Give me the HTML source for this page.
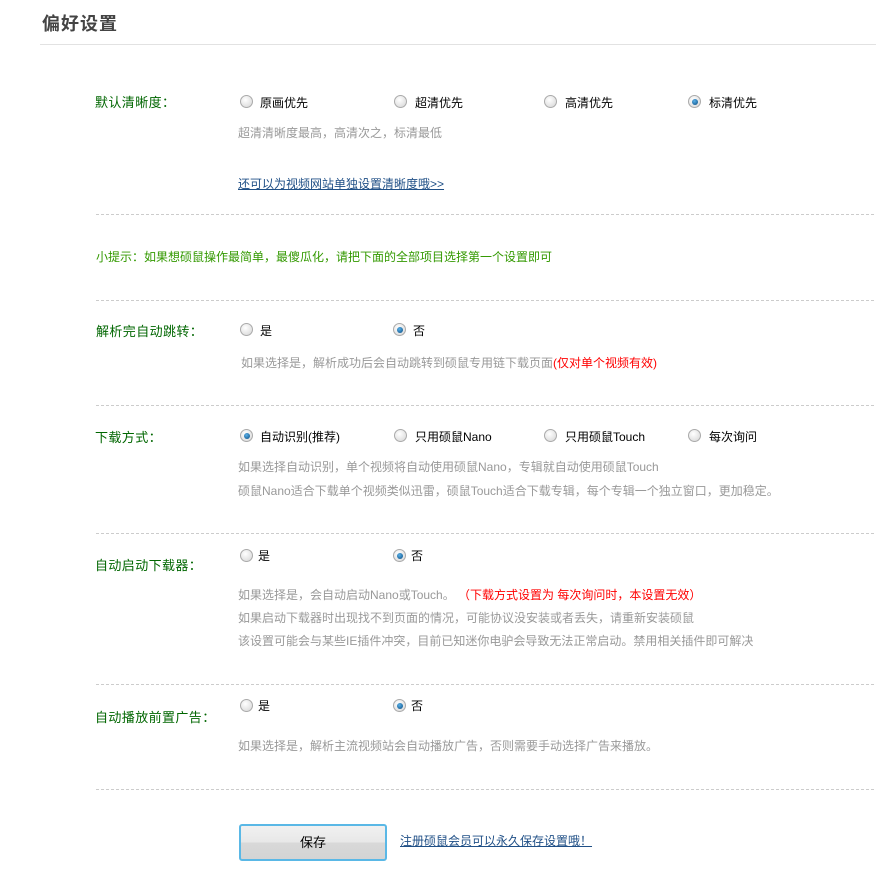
<!DOCTYPE html>
<html><head><meta charset="utf-8"><style>
body{margin:0;width:876px;height:884px;background:#fff;position:relative;font-family:"Liberation Sans","Noto Sans CJK SC",sans-serif;font-size:12px;overflow:hidden}
.a{position:absolute;white-space:nowrap;line-height:14px}
.t{position:absolute;left:42px;top:13px;font-size:18px;font-weight:bold;color:#444;letter-spacing:1px;line-height:22px}
.hl{position:absolute;left:40px;right:0;top:44px;border-top:1px solid #e2e2e2}
.d{position:absolute;left:96px;right:2px;border-top:1px dashed #ccc}
.lb{color:#006600;font-size:13px;letter-spacing:.4px;font-family:"Noto Sans CJK SC",sans-serif;line-height:16px}
.g{color:#999}
.r{position:absolute;width:11px;height:11px;border-radius:50%;border:1px solid #aaa;background:radial-gradient(circle at 40% 35%,#fff,#d4d4d4)}
.r.on::after{content:"";position:absolute;left:2.5px;top:2.5px;width:6px;height:6px;border-radius:50%;background:radial-gradient(circle at 40% 35%,#5ab0e8,#064a80)}
.o{color:#000}
.red{color:#f00}
a{color:#1f4f86;text-decoration:underline}
.btn{position:absolute;left:239px;top:824px;width:144px;height:33px;border:2px solid #5ab8e6;border-radius:3px;background:linear-gradient(#f1f1f1,#e8e8e8 48%,#d8d8d8 52%,#d4d4d4);text-align:center;line-height:33px;font-size:13px;color:#000}
</style></head><body>
<div class="t">偏好设置</div>
<div class="hl"></div>

<div class="a lb" style="left:95px;top:94px">默认清晰度：</div>
<div class="r" style="left:240px;top:95px"></div><div class="a o" style="left:260px;top:96px">原画优先</div>
<div class="r" style="left:394px;top:95px"></div><div class="a o" style="left:415px;top:96px">超清优先</div>
<div class="r" style="left:544px;top:95px"></div><div class="a o" style="left:565px;top:96px">高清优先</div>
<div class="r on" style="left:688px;top:95px"></div><div class="a o" style="left:709px;top:96px">标清优先</div>
<div class="a g" style="left:238px;top:126px">超清清晰度最高，高清次之，标清最低</div>
<div class="a" style="left:238px;top:177px"><a>还可以为视频网站单独设置清晰度哦&gt;&gt;</a></div>
<div class="d" style="top:214px"></div>

<div class="a" style="left:96px;top:250px;color:#339900;font-family:'Noto Sans CJK SC',sans-serif">小提示：如果想硕鼠操作最简单，最傻瓜化，请把下面的全部项目选择第一个设置即可</div>
<div class="d" style="top:300px"></div>

<div class="a lb" style="left:96px;top:323px">解析完自动跳转：</div>
<div class="r" style="left:240px;top:323px"></div><div class="a o" style="left:260px;top:324px">是</div>
<div class="r on" style="left:393px;top:323px"></div><div class="a o" style="left:413px;top:324px">否</div>
<div class="a g" style="left:241px;top:356px">如果选择是，解析成功后会自动跳转到硕鼠专用链下载页面<span class="red">(仅对单个视频有效)</span></div>
<div class="d" style="top:405px"></div>

<div class="a lb" style="left:95px;top:429px">下载方式：</div>
<div class="r on" style="left:240px;top:429px"></div><div class="a o" style="left:260px;top:430px">自动识别(推荐)</div>
<div class="r" style="left:394px;top:429px"></div><div class="a o" style="left:415px;top:430px">只用硕鼠Nano</div>
<div class="r" style="left:544px;top:429px"></div><div class="a o" style="left:565px;top:430px">只用硕鼠Touch</div>
<div class="r" style="left:688px;top:429px"></div><div class="a o" style="left:709px;top:430px">每次询问</div>
<div class="a g" style="left:238px;top:460px">如果选择自动识别，单个视频将自动使用硕鼠Nano，专辑就自动使用硕鼠Touch</div>
<div class="a g" style="left:238px;top:484px">硕鼠Nano适合下载单个视频类似迅雷，硕鼠Touch适合下载专辑，每个专辑一个独立窗口，更加稳定。</div>
<div class="d" style="top:533px"></div>

<div class="a lb" style="left:95px;top:557px">自动启动下载器：</div>
<div class="r" style="left:240px;top:549px"></div><div class="a o" style="left:258px;top:549px">是</div>
<div class="r on" style="left:393px;top:549px"></div><div class="a o" style="left:411px;top:549px">否</div>
<div class="a g" style="left:238px;top:588px">如果选择是，会自动启动Nano或Touch。 <span class="red">（下载方式设置为 每次询问时，本设置无效）</span></div>
<div class="a g" style="left:238px;top:611px">如果启动下载器时出现找不到页面的情况，可能协议没安装或者丢失，请重新安装硕鼠</div>
<div class="a g" style="left:238px;top:634px">该设置可能会与某些IE插件冲突，目前已知迷你电驴会导致无法正常启动。禁用相关插件即可解决</div>
<div class="d" style="top:684px"></div>

<div class="a lb" style="left:95px;top:709px">自动播放前置广告：</div>
<div class="r" style="left:240px;top:699px"></div><div class="a o" style="left:258px;top:699px">是</div>
<div class="r on" style="left:393px;top:699px"></div><div class="a o" style="left:411px;top:699px">否</div>
<div class="a g" style="left:238px;top:739px">如果选择是，解析主流视频站会自动播放广告，否则需要手动选择广告来播放。</div>
<div class="d" style="top:789px"></div>

<div class="btn">保存</div>
<div class="a" style="left:400px;top:834px"><a>注册硕鼠会员可以永久保存设置哦！</a></div>
</body></html>
